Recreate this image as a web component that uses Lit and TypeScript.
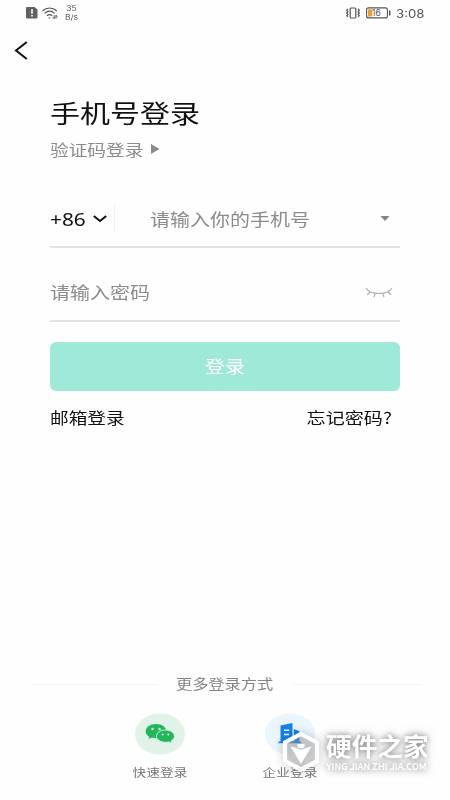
import { LitElement, html, css } from "lit";
import { customElement } from "lit/decorators.js";

@customElement("app-root")
export class AppRoot extends LitElement {
  static styles = css`
    :host {
      display: block;
      position: relative;
      width: 450px;
      height: 800px;
      overflow: hidden;
      background: #fefefe;
      color: #111;
      font-family: "Noto Sans CJK SC", "Noto Sans", sans-serif;
    }
    svg { display: block; flex: none; }
    .page { display: flex; flex-direction: column; height: 800px; }
    .t { display: block; white-space: nowrap; transform: scaleY(0.83); }
    .status {
      display: flex; align-items: center; height: 26px;
      padding: 0 26px; color: #555; font-family: Inter, sans-serif;
    }
    .speed {
      margin-left: 6px; width: 15px; text-align: center;
      font-size: 8.5px; line-height: 9px;
    }
    .speed .t { transform: scaleY(0.88); }
    .wifi { margin-left: 4px; }
    .space { flex: 1; }
    .batt { margin-left: 5px; }
    .clock { margin-left: 5px; font-size: 13.2px; line-height: 16px; width: 28px; }
    .clock .t { transform: scaleY(0.9); }
    .nav { height: 50px; padding: 15px 0 0 14px; box-sizing: border-box; }
    .main { padding: 0 50px; }
    .title { font-size: 30px; line-height: 40px; margin-top: 16px; }
    .sub { display: flex; align-items: center; gap: 8px; height: 20px; margin-top: 7px; color: #8b8b8b; font-size: 18.7px; line-height: 20px; }
    .sub .t { margin-top: -1px; }
    .field { display: flex; align-items: center; box-sizing: border-box; border-bottom: 2px solid #e3e3e3; font-size: 20px; line-height: 28px; color: #8b8b8b; }
    .phone { height: 58px; margin-top: 31px; padding-top: 1px; }
    .pass { height: 58px; margin-top: 16px; }
    .code { color: #111; font-family: "Noto Sans", sans-serif; font-size: 20.8px; width: 36px; margin-top: 1px; transform: scaleY(0.87); }
    .chev { margin-left: 7px; }
    .sep { width: 1px; height: 28px; background: #efefef; margin-left: 7px; }
    .phone .hint { margin-left: 35px; }
    .drop { margin-right: 10px; }
    .eye { margin-right: 7px; }
    .btn {
      display: flex; align-items: center; justify-content: center;
      height: 49px; margin-top: 20px; border-radius: 6px;
      background: #9fe9d8; color: #fff; font-size: 20px; line-height: 28px;
    }
    .btn .t { margin-top: -1px; }
    .links { display: flex; justify-content: space-between; margin-top: 13px; padding-right: 8px; font-size: 18.7px; line-height: 26px; }
    .links .forgot { font-size: 19.1px; }
    .more { display: flex; align-items: center; padding: 0 30px 0 32px; height: 24px; color: #858585; font-size: 16.2px; line-height: 24px; gap: 20px; }
    .more .t { margin-top: -2px; }
    .more .rule:first-child { flex: none; width: 124px; }
    .rule { flex: 1; height: 1px; background: #f1f1f1; }
    .ways { display: flex; padding: 17px 0 0 120px; gap: 50px; height: 87px; }
    .way { display: flex; flex-direction: column; align-items: center; width: 80px; color: #777; font-size: 13.7px; line-height: 18px; gap: 8px; }
    .mark { position: absolute; left: 282px; top: 730px; display: flex; gap: 6px; color: #fff; }
    .mark svg { filter: drop-shadow(0 0 4px rgba(0, 0, 0, 0.24)); overflow: visible; }
    .words { text-shadow: 0 0 5px rgba(0, 0, 0, 0.22), 0 0 8px rgba(0, 0, 0, 0.26), 0 0 12px rgba(0, 0, 0, 0.26); }
    .cn { font-family: "Liberation Sans", "Noto Sans CJK SC", sans-serif; font-size: 25.7px; line-height: 29px; font-weight: 700; transform: scaleY(0.97); margin-top: 3px; }
    .en { font-family: "Noto Sans CJK SC", sans-serif; font-size: 9.4px; line-height: 11px; font-weight: 700; margin-top: -1px; width: 103px; transform: none; letter-spacing: -0.19px; }
  `;

  render() {
    return html`
      <div class="page">
        <div class="status">
          <svg width="12" height="12" viewBox="0 0 12 12"><path d="M1 0h7.5L11.5 2.5V10.5a1 1 0 0 1-1 1H1a1 1 0 0 1-1-1V1a1 1 0 0 1 1-1z" fill="#616161"/><path d="M6 2.3v4.5M6 8v1.5" stroke="#fff" stroke-width="1.6"/></svg>
          <svg class="wifi" width="16" height="13" viewBox="0 0 16 13" fill="none" stroke="#555" stroke-width="1.2"><path d="M.5 4C4.500 0 10.500 0 14.700 4M2.700 6.400c3-2.700 6.800-2.700 9.800 0M5 8.700c1.700-1.400 3.600-1.400 5.200 0"/><path d="M6.300 10.400h2.400L7.500 12z" fill="#555" stroke="none"/><path d="M12.200 8.200v3.500l-1.500-1.600M14 11.800V8.200l1.500 1.600" stroke-width="1"/></svg>
          <div class="speed"><span class="t">35</span><span class="t">B/s</span></div>
          <div class="space"></div>
          <svg width="16" height="12" viewBox="0 0 16 12" fill="none" stroke="#555"><rect x="5.200" y="1" width="5.600" height="10" rx="1" stroke-width="1.200"/><path d="M2.800 2l-1 1.300 1 1.300-1 1.400 1 1.300-1 1.300 1 1.300M13.200 2l1 1.300-1 1.300 1 1.400-1 1.300 1 1.300-1 1.300" stroke-width="1.300"/></svg>
          <svg class="batt" width="25" height="12" viewBox="0 0 25 12"><rect x=".6" y=".9" width="20.800" height="10" rx="2" fill="none" stroke="#555" stroke-width="1.100"/><rect x="2" y="2.300" width="4.300" height="7.200" fill="#e9a23b"/><path d="M23.700 3.500v5" stroke="#555" stroke-width="1.500"/><text x="6" y="9" font-size="8.400" font-family="Inter, sans-serif" fill="#555">16</text></svg>
          <div class="clock"><span class="t">3:08</span></div>
        </div>
        <div class="nav">
          <svg width="14" height="19" viewBox="0 0 14 19" fill="none" stroke="#111" stroke-width="2"><path d="M12.800 1L2 9.500l10.800 8.500"/></svg>
        </div>
        <div class="main">
          <div class="title"><span class="t">手机号登录</span></div>
          <div class="sub"><span class="t">验证码登录</span><svg width="9" height="10" viewBox="0 0 9 10"><path d="M0 0l8.500 5L0 10z" fill="#8b8b8b"/></svg></div>
          <div class="field phone">
            <span class="t code">+86</span>
            <svg class="chev" width="14" height="8" viewBox="0 0 14 8" fill="none" stroke="#111" stroke-width="2"><path d="M.8 1l6.200 5 6.200-5"/></svg>
            <div class="sep"></div>
            <span class="t hint">请输入你的手机号</span>
            <div class="space"></div>
            <svg class="drop" width="10" height="5" viewBox="0 0 10 5"><path d="M.5 0h9L5 5z" fill="#858585"/></svg>
          </div>
          <div class="field pass">
            <span class="t">请输入密码</span>
            <div class="space"></div>
            <svg class="eye" width="28" height="11" viewBox="0 0 28 11" fill="none" stroke="#aaa" stroke-width="1.200"><path d="M1 1c4.600 7.300 21.400 7.300 26 0M5.200 4.800L2.200 7.800M10.300 6.400L9 10M17.700 6.400L19 10M22.800 4.800l3.300 3"/></svg>
          </div>
          <div class="btn"><span class="t">登录</span></div>
          <div class="links"><span class="t">邮箱登录</span><span class="t forgot">忘记密码?</span></div>
        </div>
        <div class="space"></div>
        <div class="more"><div class="rule"></div><span class="t">更多登录方式</span><div class="rule"></div></div>
        <div class="ways">
          <div class="way">
            <svg width="50" height="42" viewBox="0 0 50 42"><ellipse cx="25" cy="21" rx="25" ry="20.700" fill="#e1f3e8"/><path d="M21 11c-5.800 0-10.300 3.200-10.300 7.200 0 2.300 1.400 4.200 3.600 5.500L13.500 26l3.600-1.400c1.200.4 2.500.6 3.900.6 5.800 0 10.300-3 10.300-7S26.800 11 21 11z" fill="#24b65a"/><path d="M30.500 17c-5 0-9 2.800-9 6.200s4 6.100 9 6.100c1.200 0 2.300-.1 3.300-.4l3.200 1.300-.7-2.300c2-1.100 3.200-2.800 3.200-4.700 0-3.400-4-6.200-9-6.200z" fill="#24b65a" stroke="#e1f3e8" stroke-width=".9"/><g fill="#e1f3e8"><circle cx="17.500" cy="16" r="1.200"/><circle cx="24.500" cy="16" r="1.200"/><circle cx="27.700" cy="21.400" r="1"/><circle cx="33.300" cy="21.400" r="1"/></g></svg>
            <span class="t">快速登录</span>
          </div>
          <div class="way">
            <svg width="50" height="42" viewBox="0 0 50 42"><ellipse cx="25" cy="21" rx="25" ry="20.700" fill="#eaf5fd"/><path d="M15.500 12.600L27.500 10v18.500h1.300V16l5.700 2.200v10.300H36v1.700H13.500v-1.700h2z" fill="#1681e3"/><path d="M19 17.300h5.200M19 21.500h5.200" stroke="#eaf5fd" stroke-width="1.500"/></svg>
            <span class="t">企业登录</span>
          </div>
        </div>
      </div>
      <div class="mark">
        <svg width="38" height="43" viewBox="0 0 38 43"><path d="M19 4L35 12.500v18.500L19 39.500 3 31V12.500z" fill="#aaa" fill-opacity=".38" stroke="#fff" stroke-width="4.200"/><path d="M8.500 16.500l5 1.300 5.500 2 5.500-2 5-1.300L19 34z" fill="#fff"/><path d="M15.500 14h7v3.200L19 18.500l-3.500-1.300z" fill="#fff"/></svg>
        <div class="words"><span class="t cn">硬件之家</span><span class="t en">YING JIAN ZHI JIA.COM</span></div>
      </div>
    `;
  }
}
